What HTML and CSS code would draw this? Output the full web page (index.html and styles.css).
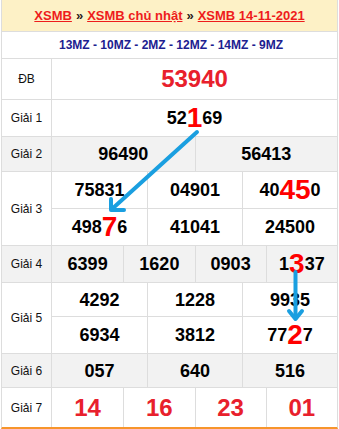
FILE: index.html
```html
<!DOCTYPE html>
<html lang="vi">
<head>
<meta charset="utf-8">
<title>XSMB 14-11-2021</title>
<link rel="stylesheet" href="styles.css">
</head>
<body>
<div class="board">
  <div class="head"><a href="#">XSMB</a><span class="sep">»</span><a href="#">XSMB chủ nhật</a><span class="sep">»</span><a href="#">XSMB 14-11-2021</a></div>
  <div class="sub">13MZ - 10MZ - 2MZ - 12MZ - 14MZ - 9MZ</div>

  <div class="row r-db">
    <div class="lbl">ĐB</div>
    <div class="vals c1"><div class="cell big">53940</div></div>
  </div>
  <div class="row r-37">
    <div class="lbl">Giải 1</div>
    <div class="vals c1"><div class="cell">52<span class="hl">1</span>69</div></div>
  </div>
  <div class="row r-35 alt">
    <div class="lbl">Giải 2</div>
    <div class="vals c2"><div class="cell">96490</div><div class="cell">56413</div></div>
  </div>
  <div class="row r-g3">
    <div class="lbl">Giải 3</div>
    <div class="vals c3 two g3">
      <div class="cell">75831</div><div class="cell">04901</div><div class="cell">40<span class="hl">45</span>0</div>
      <div class="cell">498<span class="hl">7</span>6</div><div class="cell">41041</div><div class="cell">24500</div>
    </div>
  </div>
  <div class="row r-37 alt">
    <div class="lbl">Giải 4</div>
    <div class="vals c4"><div class="cell">6399</div><div class="cell">1620</div><div class="cell">0903</div><div class="cell">1<span class="hl">3</span>37</div></div>
  </div>
  <div class="row r-g5">
    <div class="lbl">Giải 5</div>
    <div class="vals c3 two g5">
      <div class="cell">4292</div><div class="cell">1228</div><div class="cell">9935</div>
      <div class="cell">6934</div><div class="cell">3812</div><div class="cell">77<span class="hl">2</span>7</div>
    </div>
  </div>
  <div class="row r-34 alt">
    <div class="lbl">Giải 6</div>
    <div class="vals c3"><div class="cell">057</div><div class="cell">640</div><div class="cell">516</div></div>
  </div>
  <div class="row r-last">
    <div class="lbl">Giải 7</div>
    <div class="vals c4"><div class="cell big">14</div><div class="cell big">16</div><div class="cell big">23</div><div class="cell big">01</div></div>
  </div>
</div>

<svg class="arrows" width="339" height="429" viewBox="0 0 339 429" aria-hidden="true">
  <g stroke="#1a9fe0" stroke-width="4" stroke-linecap="round" stroke-linejoin="round" fill="none">
    <line x1="197" y1="132" x2="112" y2="209"/>
    <polyline points="111,199 111,210 124,210"/>
    <line x1="295.5" y1="272" x2="295.5" y2="316"/>
    <polyline points="289,311 295.5,319 302,311"/>
  </g>
</svg>
</body>
</html>
```
FILE: styles.css
```css
html, body {
  margin: 0;
  padding: 0;
  background: #ffffff;
}

body {
  font-family: "Liberation Sans", Arial, sans-serif;
  color: #000;
}

.board {
  margin: 0 1px;
  border-left: 1px solid #dddddd;
  border-right: 1px solid #dddddd;
  border-bottom: 2px solid #f7952b;
}

.head {
  height: 32px;
  box-sizing: border-box;
  border-bottom: 1px solid #dddddd;
  background: #fdf1c6;
  display: flex;
  align-items: center;
  justify-content: center;
  font-size: 13px;
  font-weight: bold;
}

.head a {
  color: #ee1c1c;
  text-decoration: underline;
}

.head .sep {
  color: #2a1a1a;
  padding: 0 4px;
}

.sub {
  height: 27px;
  box-sizing: border-box;
  border-bottom: 1px solid #dddddd;
  display: flex;
  align-items: center;
  justify-content: center;
  font-size: 12px;
  font-weight: bold;
  color: #1c2090;
  padding-left: 3px;
}

.row {
  display: flex;
  box-sizing: border-box;
  border-bottom: 1px solid #dddddd;
}

.r-db { height: 41px; }
.r-37 { height: 37px; }
.r-35 { height: 35px; }
.r-34 { height: 34px; }
.r-g3 { height: 74px; }
.r-g5 { height: 71px; }
.r-last { height: 39px; border-bottom: 0; }

.alt { background: #f2f2f2; }

.lbl {
  width: 50px;
  flex: none;
  box-sizing: border-box;
  border-right: 1px solid #dddddd;
  display: flex;
  align-items: center;
  justify-content: center;
  font-size: 12px;
  color: #111;
}

.vals {
  flex: 1;
  display: grid;
  min-width: 0;
}

.c1 { grid-template-columns: 1fr; }
.c2 { grid-template-columns: repeat(2, 1fr); }
.c3 { grid-template-columns: repeat(3, 1fr); }
.c4 { grid-template-columns: repeat(4, 1fr); }

.g3 { grid-template-rows: 37px 36px; }
.g5 { grid-template-rows: 34px 36px; }

.cell {
  box-sizing: border-box;
  display: flex;
  align-items: center;
  justify-content: center;
  border-left: 1px solid #dddddd;
  font-size: 18px;
  font-weight: bold;
  line-height: 1;
  min-width: 0;
  white-space: nowrap;
}

.c1 .cell,
.c2 .cell:nth-child(2n+1),
.c3 .cell:nth-child(3n+1),
.c4 .cell:nth-child(4n+1) {
  border-left: 0;
}

.two .cell:nth-child(-n+3) {
  border-bottom: 1px solid #dddddd;
}

.big {
  font-size: 24px;
  color: #e8202c;
}

.hl {
  font-size: 28px;
  color: #ff0000;
}

.arrows {
  position: absolute;
  left: 0;
  top: 0;
  pointer-events: none;
}
```
